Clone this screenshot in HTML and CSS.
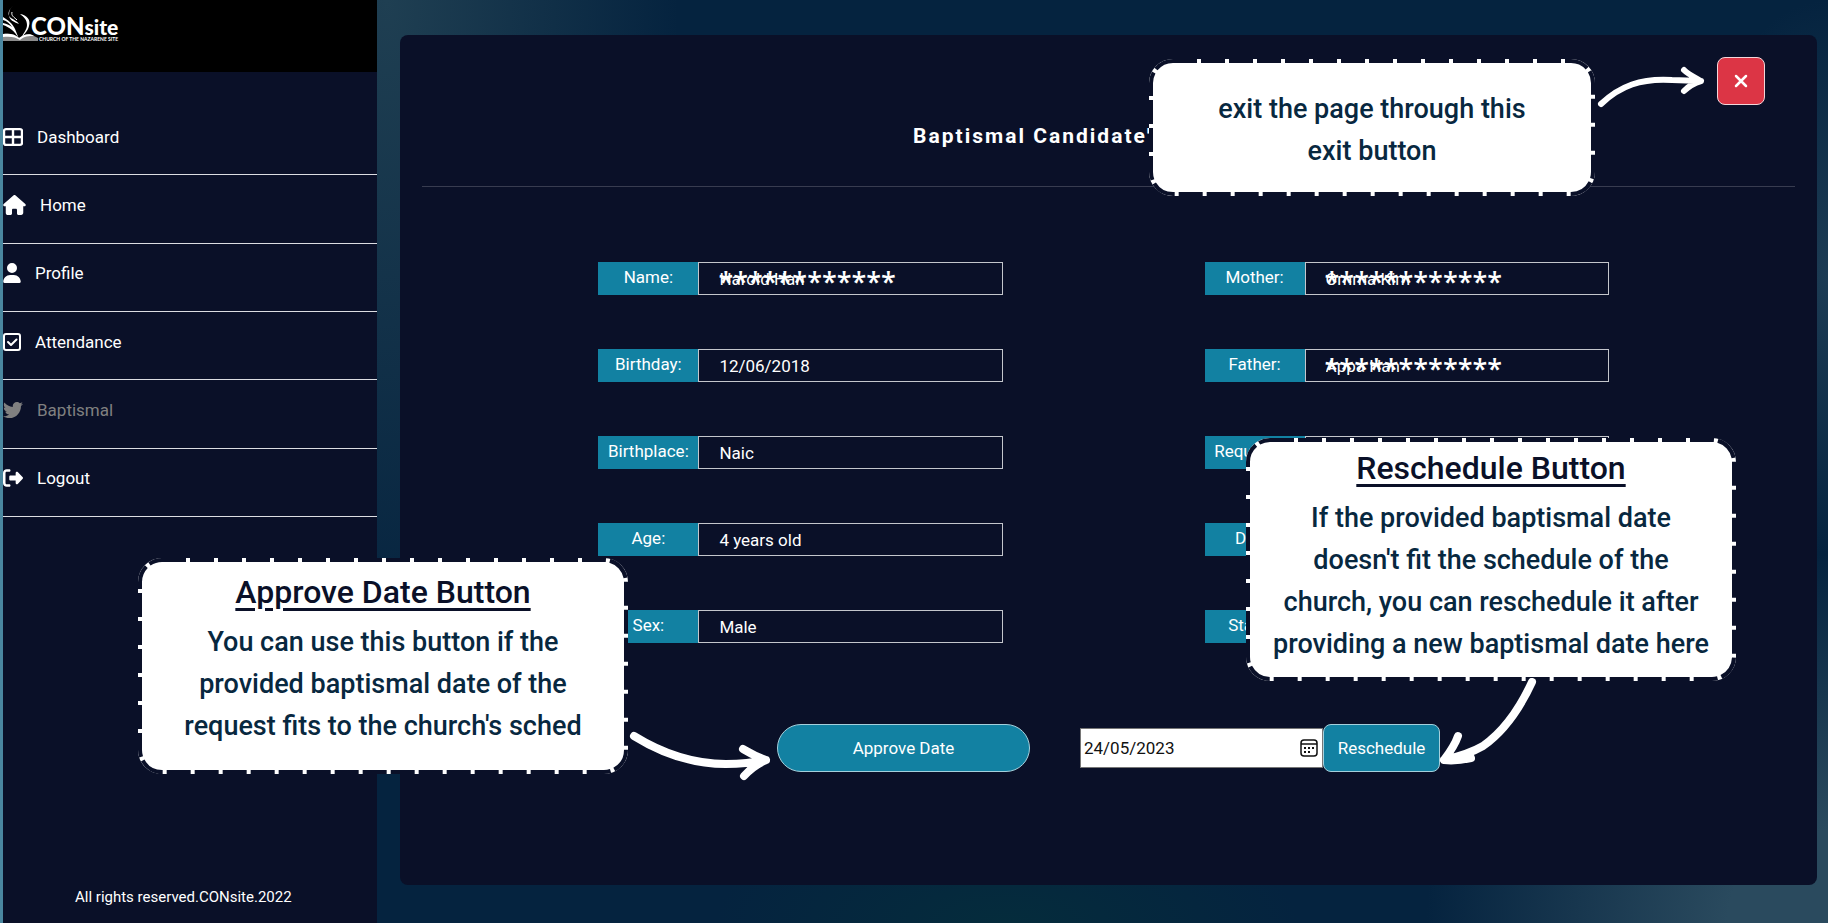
FILE: index.html
```
<!DOCTYPE html>
<html lang="en">
<head>
<meta charset="utf-8">
<title>CONsite - Baptismal</title>
<link rel="stylesheet" href="styles.css">
</head>
<body>
<div class="layout">
  <aside class="sidebar">
    <header class="brand">
      <a class="logo" href="#" aria-label="CONsite home">
        <svg class="logo-mark" viewBox="0 0 36 36" aria-hidden="true">
          <path d="M10 0C5 4 4 9 8 12c3 2 6 3 8 6-5-2-10-4-10-9 0-4 1-7 4-9z"/>
          <path d="M9 6c-1 4 2 5 5 8" fill="none" stroke="currentColor" stroke-width="1"/>
          <path d="M17 8c7 1 11 6 9 12-1 5-5 8-8 13 2-6 6-9 6-14 0-5-3-8-7-11z"/>
          <path d="M0 11c5 3 10 7 12 12l4 10C12 25 6 21 0 19v-2c4 1 7 2 9 4-2-3-5-6-9-7z"/>
          <path d="M0 28c7-1 12 0 16 4 5-4 11-5 15-2l4 2v3H0z" opacity=".55"/>
          <path d="M0 28c7-1 12 0 16 4 5-4 11-5 15-2-5 0-10 0-14 4-4-3-10-4-17-3z"/>
        </svg>
        <span class="logo-words">
          <span class="logo-name">CON<small class="logo-site">site</small></span>
          <span class="logo-tag">CHURCH OF THE NAZARENE SITE</span>
        </span>
      </a>
    </header>
    <nav class="menu">
      <a class="menu-item" href="#"><svg class="icon" width="20" height="20" viewBox="0 0 20 20" aria-hidden="true"><path fill="none" stroke="currentColor" stroke-width="2.400" d="M3 2.100h14a2 2 0 0 1 2 2v11.800a2 2 0 0 1-2 2H3a2 2 0 0 1-2-2V4.100a2 2 0 0 1 2-2zM10 2v16M1 10h18"/></svg>Dashboard</a>
      <a class="menu-item" href="#"><svg class="icon" width="23" height="20" viewBox="0 0 576 512" aria-hidden="true"><path fill="currentColor" d="M575.800 255.500c0 18-15 32.100-32 32.100h-32l.7 160.200c0 36-22 64.200-56 64.200H392c-22 0-40-18-40-40v-88c0-18-14-32-32-32h-64c-18 0-32 14-32 32v88c0 22-18 40-40 40h-64c-31 0-56-28-56-60V287.600H32c-18 0-32-14-32-32.100 0-9 3-17 10-24L266.400 8c7-7 15-8 22-8s15 2 21 7l255.400 224.500c8 7 12 15 11 24z"/></svg>Home</a>
      <a class="menu-item" href="#"><svg class="icon" width="18" height="20" viewBox="0 0 448 512" aria-hidden="true"><path fill="currentColor" d="M224 256a128 128 0 1 0 0-256 128 128 0 1 0 0 256zm-45.700 48C79.800 304 0 383.800 0 482.300 0 498.700 13.300 512 29.700 512h388.600c16.400 0 29.700-13.300 29.700-29.700C448 383.800 368.200 304 269.700 304h-91.400z"/></svg>Profile</a>
      <a class="menu-item" href="#"><svg class="icon" width="18" height="20" viewBox="0 0 18 20" aria-hidden="true"><path fill="none" stroke="currentColor" stroke-width="2" d="M3 2h12a2 2 0 0 1 2 2v12a2 2 0 0 1-2 2H3a2 2 0 0 1-2-2V4a2 2 0 0 1 2-2z"/><path fill="none" stroke="currentColor" stroke-width="2" stroke-linecap="round" stroke-linejoin="round" d="M5 10l3 3 5.500-5.500"/></svg>Attendance</a>
      <a class="menu-item menu-item-active" href="#" aria-current="page"><svg class="icon" width="20" height="20" viewBox="0 0 512 512" aria-hidden="true"><path fill="currentColor" d="M459.400 151.700c.3 4.500.3 9.100.3 13.600 0 138.700-105.600 298.600-298.600 298.600-59.500 0-114.700-17.200-161.100-47.100 8.400 1 16.600 1.300 25.300 1.300 49.100 0 94.200-16.600 130.300-44.800-46.100-1-84.800-31.200-98.100-72.800 6.500 1 13 1.600 19.800 1.600 9.400 0 18.800-1.300 27.600-3.600-48.100-9.700-84.100-52-84.100-103v-1.300c14 7.800 30.200 12.700 47.400 13.300-28.300-18.800-46.800-51-46.800-87.400 0-19.500 5.200-37.400 14.300-53 51.700 63.700 129.300 105.300 216.400 109.800-1.600-7.800-2.600-15.900-2.600-24 0-57.800 46.800-104.900 104.900-104.900 30.200 0 57.500 12.700 76.700 33.100 23.700-4.500 46.500-13.300 66.600-25.300-7.800 24.400-24.400 44.800-46.100 57.800 21.100-2.300 41.600-8.100 60.400-16.200-14.300 20.800-32.200 39.300-52.600 54.300z"/></svg>Baptismal</a>
      <a class="menu-item" href="#"><svg class="icon" width="20" height="20" viewBox="0 0 512 512" aria-hidden="true"><path fill="currentColor" d="M505 273c9-9 9-25 0-34L377 105c-9-9-22-12-34-7s-19 17-19 30v64H192c-18 0-32 14-32 32v64c0 18 14 32 32 32h132v64c0 13 7 25 19 30s25 2 34-7zM160 96c18 0 32-14 32-32s-14-32-32-32H96C43 32 0 75 0 128v256c0 53 43 96 96 96h64c18 0 32-14 32-32s-14-32-32-32H96c-18 0-32-14-32-32V128c0-18 14-32 32-32z"/></svg>Logout</a>
    </nav>
    <footer class="copyright">All rights reserved.CONsite.2022</footer>
  </aside>

  <main class="content">
    <section class="panel">
      <div class="panel-top"><button class="exit" type="button" aria-label="Exit"><svg width="14" height="14" viewBox="0 0 14 14" aria-hidden="true"><path d="M2 2l10 10M12 2L2 12" stroke="currentColor" stroke-width="2.500" stroke-linecap="round"/></svg></button></div>
      <h1 class="title">Baptismal Candidate's Information</h1>
      <form class="form">
        <div class="fields">
          <div class="field"><label class="field-label" for="name">Name:</label><input class="field-input" id="name" value="Harold Han" readonly><span class="mask">************</span></div>
          <div class="field"><label class="field-label" for="mother">Mother:</label><input class="field-input" id="mother" value="Omma Kim" readonly><span class="mask">************</span></div>
          <div class="field"><label class="field-label" for="birthday">Birthday:</label><input class="field-input" id="birthday" value="12/06/2018" readonly></div>
          <div class="field"><label class="field-label" for="father">Father:</label><input class="field-input" id="father" value="Appa Han" readonly><span class="mask">************</span></div>
          <div class="field"><label class="field-label" for="birthplace">Birthplace:</label><input class="field-input" id="birthplace" value="Naic" readonly></div>
          <div class="field"><label class="field-label" for="requester">Requester:</label><input class="field-input" id="requester" readonly></div>
          <div class="field"><label class="field-label" for="age">Age:</label><input class="field-input" id="age" value="4 years old" readonly></div>
          <div class="field"><label class="field-label" for="date">Date:</label><input class="field-input" id="date" readonly></div>
          <div class="field"><label class="field-label" for="sex">Sex:</label><input class="field-input" id="sex" value="Male" readonly></div>
          <div class="field"><label class="field-label" for="status">Status:</label><input class="field-input" id="status" readonly></div>
        </div>
        <div class="actions">
          <button class="approve" type="button">Approve Date</button>
          <div class="reschedule-group">
            <div class="date-box">
              <input class="date-input" type="text" value="24/05/2023" aria-label="New baptismal date">
              <svg class="date-icon" width="18" height="18" viewBox="0 0 18 18" aria-hidden="true"><rect x="1" y="1" width="16" height="16" rx="3" fill="none" stroke="currentColor" stroke-width="1.500"/><path d="M1 5h16" stroke="currentColor" stroke-width="1.500"/><path d="M8 8h2v2H8zM12 8h2v2h-2zM4 12h2v2H4zM8 12h2v2H8zM4 8h2v2H4z" fill="currentColor"/></svg>
            </div>
            <button class="reschedule" type="button">Reschedule</button>
          </div>
        </div>
      </form>
    </section>
  </main>
</div>

<div class="annotations">
  <div class="callout callout-exit">
    <svg class="stitches" aria-hidden="true"><rect class="stitch" x="2" y="2" rx="22"/></svg>
    <p class="callout-text">exit the page through this<br>exit button</p>
  </div>
  <div class="callout callout-approve">
    <svg class="stitches" aria-hidden="true"><rect class="stitch" x="2" y="2" rx="22"/></svg>
    <h2 class="callout-title">Approve Date Button</h2>
    <p class="callout-text">You can use this button if the<br>provided baptismal date of the<br>request fits to the church's sched</p>
  </div>
  <div class="callout callout-reschedule">
    <svg class="stitches" aria-hidden="true"><rect class="stitch" x="2" y="2" rx="22"/></svg>
    <h2 class="callout-title">Reschedule Button</h2>
    <p class="callout-text">If the provided baptismal date<br>doesn't fit the schedule of the<br>church, you can reschedule it after<br>providing a new baptismal date here</p>
  </div>
  <svg class="arrow arrow-exit" width="112" height="46" viewBox="0 0 112 46" aria-hidden="true"><path d="M5 40C24 22 45 14 76 16L105 17M88 6c4 4 10 7 17 11-7 2-12 5-17 10"/></svg>
  <svg class="arrow arrow-approve" width="148" height="58" viewBox="0 0 148 58" aria-hidden="true"><path d="M6 12C35 30 67 40 98 40c15 0 27-1 40-4M115 25c7 4 13 8 23 11-9 4-16 9-22 16"/></svg>
  <svg class="arrow arrow-reschedule" width="104" height="92" viewBox="0 0 104 92" aria-hidden="true"><path d="M95 4C83 30 66 54 46 68 34 75 20 79 7 82M21 58c-3 9-8 16-14 24 9 1 18 0 27-2"/></svg>
</div>
</body>
</html>
```
FILE: styles.css
```
* { box-sizing: border-box; }

body {
  margin: 0;
  font-family: "Ubuntu Condensed", Roboto, sans-serif;
  font-size: 17px;
  line-height: 24px;
  color: #fff;
  background: #04243f;
}

button, input { font: inherit; }

.layout {
  display: flex;
  min-height: 100vh;
  border-left: 3px solid #4a87a0;
  background:
    radial-gradient(ellipse 16% 70% at 21% 0, #1f3f52, transparent),
    radial-gradient(ellipse 22% 40% at 100% 100%, #2a4a5e 25%, transparent),
    radial-gradient(ellipse 8% 30% at 100% 30%, #1d3c54, transparent),
    radial-gradient(ellipse 16% 12% at 55% 100%, #052c3c, transparent),
    #05233f;
}

.sidebar {
  display: flex;
  flex-direction: column;
  flex: 0 0 374px;
  background: #0a1028;
}

.brand { height: 72px; padding: 6px 0; background: #000; }
.logo { display: flex; color: #fff; text-decoration: none; }
.logo-mark { flex: none; width: 36px; height: 36px; fill: currentColor; }
.logo-words { display: flex; flex-direction: column; margin-left: -8px; padding-top: 9px; }
.logo-name { font: 900 24px/21px Lato, sans-serif; }
.logo-site { font-size: 21px; }
.logo-tag { padding-left: 8px; font: 700 5px/5px Lato, sans-serif; }

.menu { display: grid; grid-auto-rows: 1fr; min-height: 410px; margin-top: 35px; }
.menu-item {
  display: flex;
  align-items: center;
  gap: 14px;
  padding-bottom: 8px;
  border-bottom: 1px solid #dcdde2;
  color: #fff;
  text-decoration: none;
}
.menu-item-active { color: #808080; }
.icon { flex: none; }

.copyright { margin-top: auto; padding: 0 0 14px 72px; font-size: 15px; }

.content { display: flex; flex: 1; min-width: 0; padding: 35px 11px 38px 23px; }
.panel { flex: 1; min-width: 0; border-radius: 8px; background: #0a1028; }
.panel-top { display: flex; justify-content: flex-end; padding: 22px 52px 0 0; }
.exit {
  display: grid;
  place-items: center;
  width: 48px;
  height: 48px;
  padding: 0;
  border: 1px solid #f3d5d9;
  border-radius: 8px;
  background: #dc3545;
  color: #fff;
}
.title {
  margin: 17px 22px 0;
  padding-bottom: 36px;
  border-bottom: 1px solid #383c50;
  font-size: 21px;
  line-height: 28px;
  letter-spacing: 2px;
  text-align: center;
}

.fields {
  display: grid;
  grid-template-columns: 1fr 1fr;
  column-gap: 20%;
  row-gap: 54px;
  padding: 75px 14.7% 0 14%;
}
.field { position: relative; display: flex; height: 33px; }
.field-label { flex: 0 0 100px; background: #1281a2; line-height: 31px; text-align: center; }
.field-input {
  flex: 1;
  min-width: 0;
  padding: 0 20px;
  border: 1px solid #c4c6cc;
  border-radius: 0;
  background: transparent;
  color: #fff;
}
.mask {
  position: absolute;
  top: 3px;
  left: 120px;
  font: 600 27px/33px "Open Sans", sans-serif;
}

.actions { display: flex; align-items: center; gap: 50px; padding: 81px 0 0 377px; }
.approve, .reschedule { height: 48px; border: 1px solid #a5d0dc; background: #1281a2; color: #fff; }
.approve { width: 253px; border-radius: 24px; }
.reschedule { width: 117px; padding: 0; border-radius: 8px; }
.reschedule-group { display: flex; align-items: center; }
.date-box { display: flex; align-items: center; width: 243px; height: 40px; padding-right: 4px; border: 1px solid #767676; background: #fff; color: #111; }
.date-input { flex: 1; min-width: 0; padding: 0 3px; border: 0; background: none; color: inherit; }

.callout {
  position: absolute;
  display: flex;
  flex-direction: column;
  border-radius: 24px;
  background: #fff;
  color: #08283f;
  text-align: center;
  white-space: nowrap;
}
.callout-exit { top: 59px; left: 1149px; width: 446px; height: 137px; padding-top: 29px; }
.callout-approve { top: 558px; left: 138px; width: 490px; height: 216px; padding-top: 13px; }
.callout-reschedule { top: 438px; left: 1246px; width: 490px; height: 243px; padding-top: 9px; }
.callout-title { margin: 0 0 8px; color: #0a1028; font-size: 32px; font-weight: 500; line-height: 42px; text-decoration: underline; text-decoration-thickness: 3px; text-underline-offset: 5px; }
.callout-text { margin: 0; font-size: 27px; font-weight: 500; line-height: 42px; }
.stitches { position: absolute; top: 0; left: 0; width: 100%; height: 100%; }
.stitch { width: calc(100% - 4px); height: calc(100% - 4px); fill: none; stroke: #0a1028; stroke-width: 4px; stroke-dasharray: 24 4; }

.arrow { position: absolute; fill: none; stroke: #fff; stroke-width: 8px; stroke-linecap: round; stroke-linejoin: round; }
.arrow-exit { top: 64px; left: 1596px; stroke-width: 6px; }
.arrow-approve { top: 724px; left: 628px; }
.arrow-reschedule { top: 678px; left: 1437px; }
```
